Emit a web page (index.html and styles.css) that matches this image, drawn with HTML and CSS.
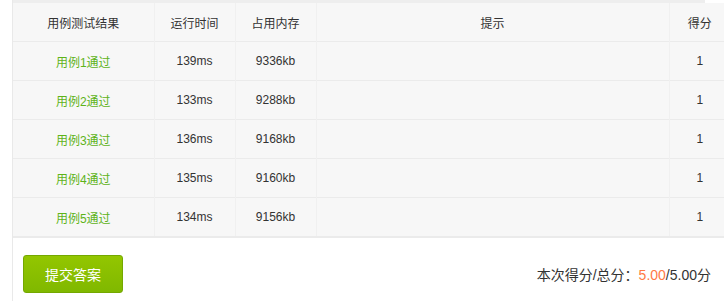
FILE: index.html
```html
<!DOCTYPE html>
<html lang="zh">
<head>
<meta charset="utf-8">
<link rel="stylesheet" href="styles.css">
</head>
<body>
<div class="panel">
  <div class="topstrip"></div>
  <table class="result">
    <colgroup>
      <col class="c1"><col class="c2"><col class="c3"><col class="c4"><col class="c5">
    </colgroup>
    <thead>
      <tr><th>用例测试结果</th><th>运行时间</th><th>占用内存</th><th>提示</th><th>得分</th></tr>
    </thead>
    <tbody>
      <tr><td class="pass">用例1通过</td><td>139ms</td><td>9336kb</td><td></td><td>1</td></tr>
      <tr><td class="pass">用例2通过</td><td>133ms</td><td>9288kb</td><td></td><td>1</td></tr>
      <tr><td class="pass">用例3通过</td><td>136ms</td><td>9168kb</td><td></td><td>1</td></tr>
      <tr><td class="pass">用例4通过</td><td>135ms</td><td>9160kb</td><td></td><td>1</td></tr>
      <tr><td class="pass">用例5通过</td><td>134ms</td><td>9156kb</td><td></td><td>1</td></tr>
    </tbody>
  </table>
  <div class="footer">
    <button class="submit">提交答案</button>
    <div class="score">本次得分/总分：<span class="got">5.00</span>/5.00分</div>
  </div>
</div>
</body>
</html>
```
FILE: styles.css
```css
html, body {
  margin: 0;
  padding: 0;
  background: #fff;
  overflow: hidden;
  height: 301px;
}
body {
  font-family: "Liberation Sans", "Noto Sans CJK SC", sans-serif;
  color: #333;
}
.panel {
  margin-left: 12px;
  border-left: 1px solid #e9e9e9;
  height: 301px;
  width: 730px;
}
.topstrip {
  height: 3px;
  width: 692px;
  background: #eeeeee;
}
.result {
  border-collapse: collapse;
  table-layout: fixed;
  width: 717px;
  background: #f7f7f7;
  font-size: 12px;
  border-bottom: 2px solid #ebebeb;
}
.c1 { width: 141px; }
.c2 { width: 81px; }
.c3 { width: 81px; }
.c4 { width: 353px; }
.c5 { width: 61px; }
.result th, .result td {
  height: 38px;
  padding: 0;
  text-align: center;
  font-weight: normal;
  border-left: 1px solid #f0f0f0;
  border-top: 1px solid #ebebeb;
  color: #333;
}
.result th {
  border-top: none;
  height: 38px;
}
.result th:first-child, .result td:first-child {
  border-left: none;
}
.result td.pass {
  color: #5eb319;
}
.footer {
  width: 698px;
  box-sizing: border-box;
  display: flex;
  align-items: center;
  justify-content: space-between;
  padding: 17px 0 0 10px;
}
.submit {
  width: 100px;
  height: 38px;
  border: 1px solid #74a800;
  border-radius: 3px;
  background: linear-gradient(#93c600, #80b800);
  color: #fff;
  font-family: "Liberation Sans", "Noto Sans CJK SC", sans-serif;
  font-size: 14px;
  padding: 0;
}
.score {
  font-size: 14px;
  color: #333;
}
.score .got {
  color: #ff7a45;
}
```
